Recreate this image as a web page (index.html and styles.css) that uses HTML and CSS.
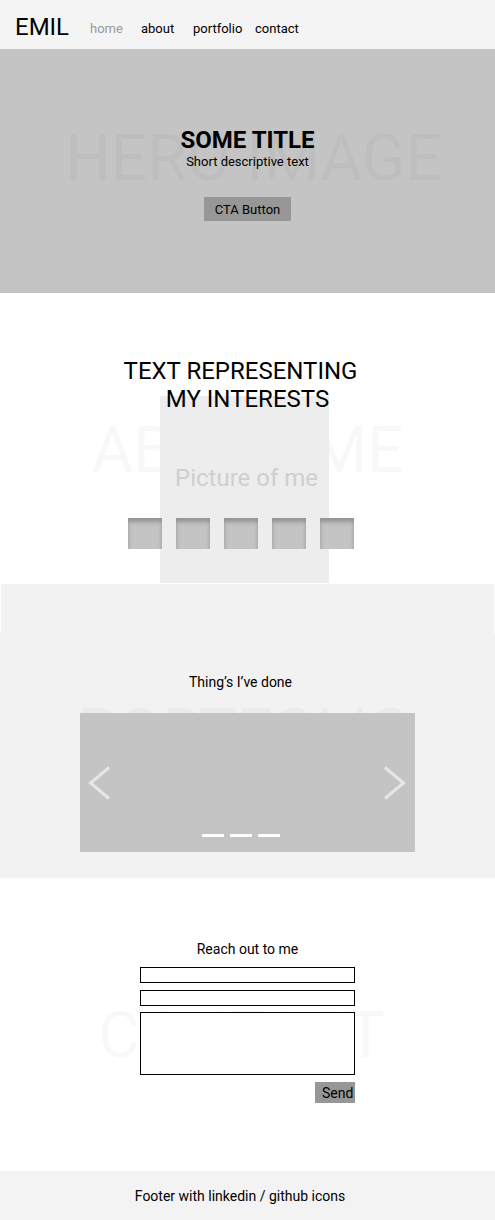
FILE: index.html
```html
<!DOCTYPE html>
<html>
<head>
<meta charset="utf-8">
<title>Emil</title>
<link rel="stylesheet" href="styles.css">
</head>
<body>
<header class="header">
  <div class="logo">EMIL</div>
  <nav class="nav">
    <a class="nav-link nav-home">home</a>
    <a class="nav-link nav-about">about</a>
    <a class="nav-link nav-portfolio">portfolio</a>
    <a class="nav-link nav-contact">contact</a>
  </nav>
</header>

<section class="hero">
  <div class="watermark wm-hero">HERO IMAGE</div>
  <div class="hero-content">
    <h1 class="hero-title">SOME TITLE</h1>
    <p class="hero-sub">Short descriptive text</p>
    <button class="cta">CTA Button</button>
  </div>
</section>

<section class="about">
  <div class="watermark wm-about">ABOUT ME</div>
  <h2 class="about-title"><span class="line1">TEXT REPRESENTING</span><span class="line2">MY INTERESTS</span></h2>
  <div class="picture">
    <div class="picture-label">Picture of me</div>
    <div class="interests">
      <div class="square"></div>
      <div class="square"></div>
      <div class="square"></div>
      <div class="square"></div>
      <div class="square"></div>
    </div>
  </div>
</section>

<div class="strip"></div>

<section class="portfolio">
  <div class="watermark wm-portfolio">PORTFOLIO</div>
  <h3 class="section-title portfolio-title">Thing’s I’ve done</h3>
  <div class="carousel">
    <svg class="arrow" width="24" height="34" viewBox="0 0 24 34"><polyline points="21,1.5 2.5,17 21,32.5" fill="none" stroke="#e6e6e6" stroke-width="3"/></svg>
    <svg class="arrow" width="24" height="34" viewBox="0 0 24 34"><polyline points="3,1.5 21.5,17 3,32.5" fill="none" stroke="#e6e6e6" stroke-width="3"/></svg>
    <div class="dots"><span class="dot"></span><span class="dot"></span><span class="dot"></span></div>
  </div>
</section>

<section class="contact">
  <div class="watermark wm-contact">CONTACT</div>
  <h3 class="section-title">Reach out to me</h3>
  <form class="form">
    <input class="field" type="text">
    <input class="field" type="text">
    <textarea class="field area"></textarea>
    <button class="send" type="button">Send</button>
  </form>
</section>

<footer class="footer">Footer with linkedin / github icons</footer>
</body>
</html>
```

FILE: styles.css
```css
* { box-sizing: border-box; }
html, body { margin: 0; padding: 0; }
body {
  font-family: Roboto, "Liberation Sans", sans-serif;
  color: #000;
  background: #fff;
  width: 495px;
}

.header {
  height: 49px;
  background: #f4f4f4;
  display: flex;
  align-items: flex-start;
  padding: 13px 15px 0;
}
.logo {
  font-size: 24px;
  line-height: 28px;
  width: 75px;
}
.nav {
  display: flex;
  margin-top: 8px;
  font-size: 13px;
  line-height: 15px;
}
.nav-link { color: #000; text-decoration: none; }
.nav-home { width: 51px; color: #999; }
.nav-about { width: 52px; }
.nav-portfolio { width: 62px; }

.watermark {
  position: absolute;
  left: 0;
  right: 0;
  text-align: center;
  font-size: 64px;
  line-height: 64px;
  color: rgba(0, 0, 0, 0.028);
  white-space: nowrap;
}

.hero {
  position: relative;
  height: 244px;
  background: #c4c4c4;
  text-align: center;
  padding-top: 77px;
}
.wm-hero { top: 78px; padding-left: 12px; }
.hero-content { position: relative; }
.hero-title {
  margin: 0;
  font-size: 24px;
  line-height: 28px;
  font-weight: 700;
}
.hero-sub {
  margin: 0;
  font-size: 13px;
  line-height: 15px;
}
.cta {
  display: block;
  margin: 28px auto 0;
  width: 87px;
  height: 24px;
  border: 0;
  padding: 0;
  background: #979797;
  font-family: inherit;
  font-size: 13px;
  color: #000;
}

.about {
  position: relative;
  padding-top: 64px;
  padding-bottom: 1px;
  text-align: center;
}
.wm-about { top: 126px; }
.about-title {
  position: relative;
  z-index: 2;
  margin: 0;
  font-size: 24px;
  line-height: 28px;
  font-weight: 400;
}
.about-title .line1 { display: block; padding-right: 14px; }
.about-title .line2 { display: block; }
.picture {
  position: relative;
  width: 169px;
  height: 187px;
  margin: -17px 0 0 160px;
  background: #ededed;
  display: flex;
  flex-direction: column;
  padding-top: 68px;
}
.picture-label {
  font-size: 24px;
  line-height: 28px;
  color: #cfcfcf;
  padding-left: 4px;
}
.interests {
  display: flex;
  gap: 14px;
  margin: 26px 0 0 -32px;
  z-index: 3;
}
.square {
  width: 34px;
  height: 31px;
  background: #c4c4c4;
  box-shadow: inset 0 4px 4px rgba(0, 0, 0, 0.25);
  flex: none;
}

.strip {
  height: 49px;
  margin: 0 1px;
  background: #f2f2f2;
}

.portfolio {
  position: relative;
  background: #f2f2f2;
  padding-top: 41px;
  padding-bottom: 26px;
  text-align: center;
}
.wm-portfolio { top: 68px; padding-right: 5px; }
.section-title {
  position: relative;
  margin: 0;
  font-size: 14px;
  line-height: 16px;
  font-weight: 400;
}
.portfolio-title { padding-right: 14px; }
.carousel {
  position: relative;
  width: 335px;
  height: 139px;
  margin: 23px auto 0;
  background: #c4c4c4;
  display: flex;
  justify-content: space-between;
  align-items: center;
  padding: 0 9px 0 8px;
}
.arrow { display: block; }
.dots {
  position: absolute;
  left: 122px;
  bottom: 15px;
  display: flex;
  gap: 6px;
}
.dot {
  display: block;
  width: 22px;
  height: 3px;
  background: #fff;
}

.contact {
  position: relative;
  height: 293px;
  padding-top: 63px;
  text-align: center;
}
.wm-contact { top: 126px; padding-right: 12px; }
.form {
  position: relative;
  width: 215px;
  margin: 10px auto 0;
  display: flex;
  flex-direction: column;
  gap: 7px;
}
.field {
  display: block;
  width: 100%;
  height: 16px;
  margin: 0;
  padding: 0;
  border: 1px solid #000;
  border-radius: 0;
  background: #fff;
  outline: none;
  resize: none;
}
.area { height: 63px; margin-top: -1px; }
.send {
  align-self: flex-end;
  width: 40px;
  height: 21px;
  border: 0;
  padding: 0 0 0 7px;
  text-align: left;
  background: #979797;
  font-family: inherit;
  font-size: 14px;
  color: #000;
}

.footer {
  height: 49px;
  background: #f3f3f3;
  text-align: center;
  font-size: 14px;
  line-height: 16px;
  padding: 17px 15px 0 0;
}
```
